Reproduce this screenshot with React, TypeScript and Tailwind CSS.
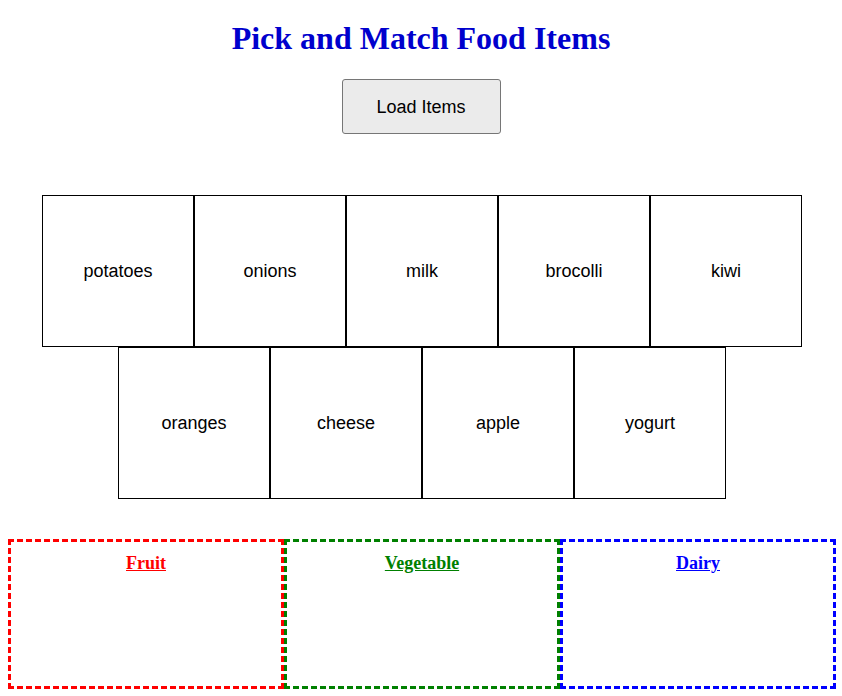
const rowOne = ["potatoes", "onions", "milk", "brocolli", "kiwi"];
const rowTwo = ["oranges", "cheese", "apple", "yogurt"];

const bins = [
  { name: "Fruit", box: "border-[#ff0000]", text: "text-[#ff0000]" },
  { name: "Vegetable", box: "border-[#008000]", text: "text-[#008000]" },
  { name: "Dairy", box: "border-[#0000ff]", text: "text-[#0000ff]" },
];

const FoodItem = ({ name }: { name: string }) => (
  <div className="w-[152px] h-[152px] border border-black flex items-center justify-center text-[18px] text-black">
    {name}
  </div>
);

export default function App() {
  return (
    <div className="min-h-screen bg-white px-2 pb-2 pt-[20px] font-['Liberation_Sans',Arial,sans-serif]">
      <h1 className="text-center text-[32px] leading-[37px] font-bold text-[#0000cd] font-['Liberation_Serif','Times_New_Roman',serif]">
        Pick and Match Food Items
      </h1>
      <div className="flex justify-center mt-[22px]">
        <button className="w-[159px] h-[55px] pt-[2px] bg-[#ebebeb] border border-[#767676] rounded-[3px] text-[18px] text-black">
          Load Items
        </button>
      </div>

      <div className="mt-[61px] flex flex-col items-center pl-[2px]">
        <div className="flex">
          {rowOne.map((item) => (
            <FoodItem key={item} name={item} />
          ))}
        </div>
        <div className="flex">
          {rowTwo.map((item) => (
            <FoodItem key={item} name={item} />
          ))}
        </div>
      </div>

      <div className="mt-[40px] flex">
        {bins.map((bin) => (
          <div
            key={bin.name}
            className={`w-[276px] shrink-0 h-[150px] border-[3px] border-dashed ${bin.box} pt-[8px] text-center`}
          >
            <span
              className={`text-[18px] font-bold underline ${bin.text} font-['Liberation_Serif','Times_New_Roman',serif]`}
            >
              {bin.name}
            </span>
          </div>
        ))}
      </div>
    </div>
  );
}
